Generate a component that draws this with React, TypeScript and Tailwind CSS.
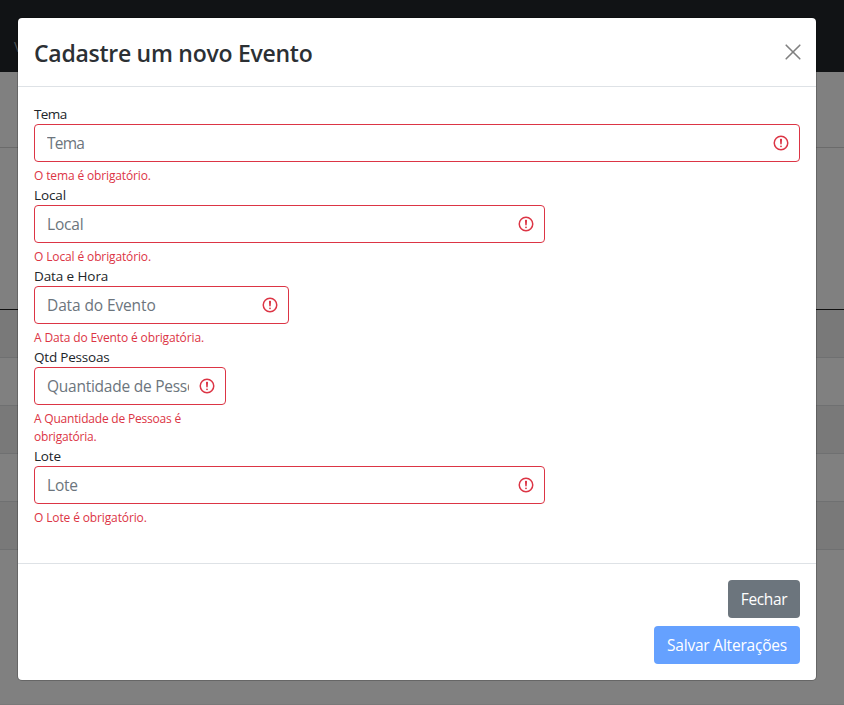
import React from "react";

type FieldProps = {
  label: string;
  placeholder: string;
  error: string;
  width: string;
  labelStyle: string;
  inputStyle: string;
  errorStyle: string;
};

function InvalidIcon() {
  return (
    <svg className="pointer-events-none absolute top-[10px] right-[10px] h-[18px] w-[18px]" viewBox="0 0 12 12" fill="none" stroke="#dc3545">
      <circle cx="6" cy="6" r="4.5" />
      <path strokeLinejoin="round" d="M5.8 3.6h.4L6 6.5z" />
      <circle cx="6" cy="8.2" r=".6" fill="#dc3545" stroke="none" />
    </svg>
  );
}

function Field({ label, placeholder, error, width, labelStyle, inputStyle, errorStyle }: FieldProps) {
  return (
    <div className={width}>
      <label className={`block h-[21px] whitespace-nowrap text-[13.5px] leading-[23px] ${labelStyle}`}>{label}</label>
      <div className="relative">
        <input
          placeholder={placeholder}
          className={`block h-[38px] w-full rounded-[4px] border border-[#dc3545] bg-white pr-[36px] pl-3 text-[15.5px] text-[#212529] placeholder:text-[#6c757d] placeholder:opacity-100 ${inputStyle}`}
        />
        <InvalidIcon />
      </div>
      <div className={`pt-[5px] -mb-px text-[12px] leading-[18px] text-[#dc3545] ${errorStyle}`}>{error}</div>
    </div>
  );
}

const fields: FieldProps[] = [
  { label: "Tema", placeholder: "Tema", error: "O tema é obrigatório.", width: "w-full", labelStyle: "tracking-[-0.6px]", inputStyle: "tracking-[-0.8px]", errorStyle: "tracking-[-0.14px]" },
  { label: "Local", placeholder: "Local", error: "O Local é obrigatório.", width: "w-[511px]", labelStyle: "tracking-[-0.1px]", inputStyle: "tracking-[-0.2px]", errorStyle: "tracking-[-0.13px]" },
  { label: "Data e Hora", placeholder: "Data do Evento", error: "A Data do Evento é obrigatória.", width: "w-[255px]", labelStyle: "tracking-[-0.1px]", inputStyle: "tracking-[-0.12px]", errorStyle: "tracking-[-0.13px]" },
  { label: "Qtd Pessoas", placeholder: "Quantidade de Pessoas", error: "A Quantidade de Pessoas é obrigatória.", width: "w-[192px]", labelStyle: "tracking-[-0.2px]", inputStyle: "tracking-[-0.25px]", errorStyle: "tracking-[-0.2px]" },
  { label: "Lote", placeholder: "Lote", error: "O Lote é obrigatório.", width: "w-[511px]", labelStyle: "tracking-[-0.2px]", inputStyle: "tracking-[-0.2px]", errorStyle: "tracking-[-0.13px]" },
];

function Backdrop() {
  return (
    <div className="flex h-full flex-col bg-[#808080]">
      <div className="h-[72px] bg-[#111315] pt-[36px] pl-[14px] text-[14px] text-[#4d5256]">V</div>
      <div className="h-[76px] border-b border-[#6b6b6b]" />
      <div className="h-[162px] border-b border-[#101010]" />
      <div className="h-12 border-b border-[#6f7071] bg-[#797979]" />
      <div className="h-12 border-b border-[#6f7071]" />
      <div className="h-12 border-b border-[#6f7071] bg-[#797979]" />
      <div className="h-12 border-b border-[#6f7071]" />
      <div className="h-12 border-b border-[#6f7071] bg-[#797979]" />
      <div className="grow border-b border-[#797979]" />
    </div>
  );
}

export default function App() {
  return (
    <div className="relative h-[705px] w-[844px] overflow-hidden font-['Open_Sans','Noto_Sans',sans-serif] text-[#212529]">
      <Backdrop />
      <div className="absolute top-[17px] left-[17px] flex h-[664px] w-[800px] flex-col rounded-[5px] border border-black/20 bg-white bg-clip-padding">
        <header className="flex h-[69px] items-center justify-between border-b border-[#dee2e6] px-4">
          <h4 className="pt-[2px] text-[23px] font-semibold tracking-[-0.27px] whitespace-nowrap text-[#2c3034]">Cadastre um novo Evento</h4>
          <svg className="-mr-px h-4 w-4" viewBox="0 0 16 16" stroke="#808080" strokeWidth="1.6" strokeLinecap="round">
            <path d="M1.2 1.2 14.8 14.8M14.8 1.2 1.2 14.8" />
          </svg>
        </header>
        <div className="grow px-4 pt-4">
          {fields.map((f) => (
            <Field key={f.label} {...f} />
          ))}
        </div>
        <footer className="flex h-[117px] flex-col items-end gap-2 border-t border-[#dee2e6] px-4 pt-4 text-[15.5px] text-white">
          <button className="h-[38px] w-[72px] rounded-[4px] bg-[#6c757d] pt-[2px] whitespace-nowrap tracking-[-0.35px]">Fechar</button>
          <button className="h-[38px] w-[146px] rounded-[4px] bg-[#65a1ff] pt-[2px] whitespace-nowrap tracking-[-0.2px]">Salvar Alterações</button>
        </footer>
      </div>
    </div>
  );
}
